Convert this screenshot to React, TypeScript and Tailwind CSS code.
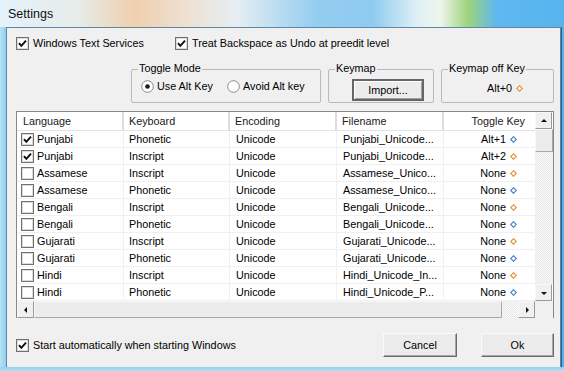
import React from "react";

const Check = ({ checked }: { checked: boolean }) => (
  <svg width="13" height="13" viewBox="0 0 13 13" className="shrink-0">
    <rect x="0.5" y="0.5" width="12" height="12" fill="#ffffff" stroke="#707070" />
    <rect x="1.5" y="1.5" width="10" height="10" fill="none" stroke="#dcdcdc" />
    {checked && (
      <path d="M3 6.2 L5.3 8.8 L10 3.6" fill="none" stroke="#111" strokeWidth="2" />
    )}
  </svg>
);

const Radio = ({ checked }: { checked: boolean }) => (
  <svg width="13" height="13" viewBox="0 0 13 13" className="shrink-0">
    <circle cx="6.5" cy="6.5" r="5.8" fill="#ffffff" stroke="#8a8a8a" />
    {checked && <circle cx="6.5" cy="6.5" r="2.3" fill="#1a1a1a" />}
  </svg>
);

const Diamond = ({ color }: { color: string }) => (
  <svg width="7" height="7" viewBox="0 0 7 7" className="shrink-0">
    <path d="M3.5 0.7 L6.3 3.5 L3.5 6.3 L0.7 3.5 Z" fill="#fff" stroke={color} strokeWidth="1.1" />
  </svg>
);

const Arrow = ({ dir }: { dir: "up" | "down" | "left" | "right" }) => {
  const d = {
    up: "M1 5 L4 2 L7 5 Z",
    down: "M1 3 L4 6 L7 3 Z",
    left: "M5 1 L2 4 L5 7 Z",
    right: "M3 1 L6 4 L3 7 Z",
  }[dir];
  return (
    <svg width="8" height="8" viewBox="0 0 8 8">
      <path d={d} fill="#111" />
    </svg>
  );
};

const ScrollBtn = ({ dir }: { dir: "up" | "down" | "left" | "right" }) => (
  <div className="w-[17px] h-[17px] shrink-0 flex items-center justify-center bg-[#f0f0f0] border border-t-[#f8f8f8] border-l-[#f8f8f8] border-r-[#9a9a9a] border-b-[#9a9a9a]">
    <Arrow dir={dir} />
  </div>
);

const rows: [string, string, string, string, string, boolean, string][] = [
  ["Punjabi", "Phonetic", "Unicode", "Punjabi_Unicode...", "Alt+1", true, "#3a7fd0"],
  ["Punjabi", "Inscript", "Unicode", "Punjabi_Unicode...", "Alt+2", true, "#e0902a"],
  ["Assamese", "Inscript", "Unicode", "Assamese_Unico...", "None", false, "#e0902a"],
  ["Assamese", "Phonetic", "Unicode", "Assamese_Unico...", "None", false, "#3a7fd0"],
  ["Bengali", "Inscript", "Unicode", "Bengali_Unicode...", "None", false, "#e0902a"],
  ["Bengali", "Phonetic", "Unicode", "Bengali_Unicode...", "None", false, "#3a7fd0"],
  ["Gujarati", "Inscript", "Unicode", "Gujarati_Unicode...", "None", false, "#e0902a"],
  ["Gujarati", "Phonetic", "Unicode", "Gujarati_Unicode...", "None", false, "#3a7fd0"],
  ["Hindi", "Inscript", "Unicode", "Hindi_Unicode_In...", "None", false, "#e0902a"],
  ["Hindi", "Phonetic", "Unicode", "Hindi_Unicode_P...", "None", false, "#3a7fd0"],
];

const Group = ({ label, w, children }: { label: string; w: string; children: React.ReactNode }) => (
  <div className={`relative h-[34px] border border-[#b9b9b9] rounded-[2px] ${w}`}>
    <span className="absolute left-[6px] top-[-8px] bg-[#f0f0f0] px-[1px] leading-[13px]">{label}</span>
    {children}
  </div>
);

const Button = ({ children, w }: { children: React.ReactNode; w: string }) => (
  <div className={`h-[24px] ${w} flex items-center justify-center bg-[#ececec] border border-t-[#fafafa] border-l-[#fafafa] border-r-[#6a6a6a] border-b-[#6a6a6a] shadow-[inset_-1px_-1px_0_#a8a8a8]`}>
    {children}
  </div>
);

export default function App() {
  return (
    <div className="w-[564px] h-[371px] flex flex-col bg-[#9ad4ef] font-['Liberation_Sans',Arial,sans-serif] text-[10.8px] text-black overflow-hidden">
      {/* title bar */}
      <div className="h-[27px] shrink-0 flex items-center pl-[8px] bg-[linear-gradient(90deg,#e4f2fa_0%,#e6ece8_14%,#f0cfae_24%,#ede2d6_34%,#e6eef3_42%,#94cdf0_56%,#8ecbf0_66%,#dff0f6_74%,#eef6ec_78%,#9ed37c_83%,#5fb8ef_88%,#56b4ee_100%)]">
        <span className="text-[12.5px] text-[#111] font-['Liberation_Sans',sans-serif] mt-[1px]">Settings</span>
      </div>
      <div className="flex flex-1 min-h-0">
        <div className="w-[6px] bg-[linear-gradient(90deg,#b6e2f3,#8fd0ee)]" />
        {/* client */}
        <div className="w-[555px] h-[340px] bg-[#f0f0f0] border border-[#5f86a4] border-b-0 flex flex-col">
          {/* row 1 */}
          <div className="mt-[9px] ml-[9px] h-[13px] flex items-center">
            <div className="flex items-center gap-[4px] w-[159px]">
              <Check checked />
              <span>Windows Text Services</span>
            </div>
            <div className="flex items-center gap-[4px]">
              <Check checked />
              <span>Treat Backspace as Undo at preedit level</span>
            </div>
          </div>
          {/* groups */}
          <div className="mt-[19px] ml-[124px] flex gap-[7px]">
            <Group label="Toggle Mode" w="w-[190px]">
              <div className="flex items-center h-full pl-[9px] pt-[1px]">
                <div className="flex items-center gap-[3px] w-[86px]">
                  <Radio checked />
                  <span>Use Alt Key</span>
                </div>
                <div className="flex items-center gap-[3px]">
                  <Radio checked={false} />
                  <span>Avoid Alt key</span>
                </div>
              </div>
            </Group>
            <Group label="Keymap" w="w-[106px]">
              <div className="h-full flex items-end pb-[1px] pl-[23px]">
                <div className="w-[72px] h-[22px] flex items-center justify-center bg-[#ececec] border-2 border-[#666] shadow-[inset_1px_1px_0_#fff,inset_-1px_-1px_0_#a0a0a0]">
                  Import...
                </div>
              </div>
            </Group>
            <Group label="Keymap off Key" w="w-[113px]">
              <div className="h-full flex items-center justify-end pr-[30px] gap-[4px] pt-[4px]">
                <span>Alt+0</span>
                <Diamond color="#e0902a" />
              </div>
            </Group>
          </div>
          {/* table */}
          <div className="mt-[8px] ml-[9px] w-[538px] h-[207px] border border-[#828790] bg-white flex flex-col">
            <div className="flex h-[189px]">
              <div className="w-[518px] flex flex-col">
                <div className="h-[19px] flex border-b border-[#e3e3e3] text-[#1a1a1a]">
                  <div className="w-[107px] pl-[6px] flex items-center border-r-2 border-[#dcdcdc]">Language</div>
                  <div className="w-[106px] pl-[5px] flex items-center border-r-2 border-[#dcdcdc]">Keyboard</div>
                  <div className="w-[107px] pl-[5px] flex items-center border-r-2 border-[#dcdcdc]">Encoding</div>
                  <div className="w-[107px] pl-[5px] flex items-center border-r-2 border-[#dcdcdc]">Filename</div>
                  <div className="flex-1 flex items-center justify-end pr-[10px]">Toggle Key</div>
                </div>
                {rows.map((r, i) => (
                  <div key={i} className="h-[17px] flex border-b border-[#f0f0f0]">
                    <div className="w-[107px] pl-[4px] flex items-center gap-[3px] border-r border-[#f0f0f0]">
                      <Check checked={r[5]} />
                      <span>{r[0]}</span>
                    </div>
                    <div className="w-[106px] pl-[5px] flex items-center border-r border-[#f0f0f0]">{r[1]}</div>
                    <div className="w-[107px] pl-[6px] flex items-center border-r border-[#f0f0f0]">{r[2]}</div>
                    <div className="w-[107px] pl-[6px] flex items-center border-r border-[#f0f0f0]">{r[3]}</div>
                    <div className="flex-1 flex items-center justify-end pr-[18px] gap-[4px]">
                      <span>{r[4]}</span>
                      <Diamond color={r[6]} />
                    </div>
                  </div>
                ))}
              </div>
              {/* vertical scrollbar */}
              <div className="w-[18px] flex flex-col">
                <ScrollBtn dir="up" />
                <div className="h-[23px] bg-[#ececec] border border-[#a8a8a8] border-t-[#f8f8f8] border-l-[#f8f8f8]" />
                <div className="flex-1 bg-[repeating-conic-gradient(#e6e6e6_0_25%,#fbfbfb_0_50%)] bg-[length:2px_2px]" />
                <ScrollBtn dir="down" />
              </div>
            </div>
            {/* horizontal scrollbar */}
            <div className="h-[17px] flex">
              <ScrollBtn dir="left" />
              <div className="w-[468px] bg-[#ececec] border border-[#a8a8a8] border-t-[#f8f8f8] border-l-[#f8f8f8]" />
              <div className="w-[16px] bg-[repeating-conic-gradient(#e6e6e6_0_25%,#fbfbfb_0_50%)] bg-[length:2px_2px]" />
              <ScrollBtn dir="right" />
              <div className="flex-1 bg-[#f0f0f0]" />
            </div>
          </div>
          {/* bottom row */}
          <div className="mt-[15px] flex items-center">
            <div className="ml-[9px] flex items-center gap-[4px] w-[367px]">
              <Check checked />
              <span>Start automatically when starting Windows</span>
            </div>
            <Button w="w-[74px]">Cancel</Button>
            <div className="w-[24px]" />
            <Button w="w-[73px]">Ok</Button>
          </div>
        </div>
        <div className="flex-1 bg-[#56b4ee] border-l border-[#2f5f86]" />
      </div>
      <div className="h-[4px] shrink-0 bg-[linear-gradient(180deg,#8fd0ee,#b6e2f3)]" />
    </div>
  );
}
